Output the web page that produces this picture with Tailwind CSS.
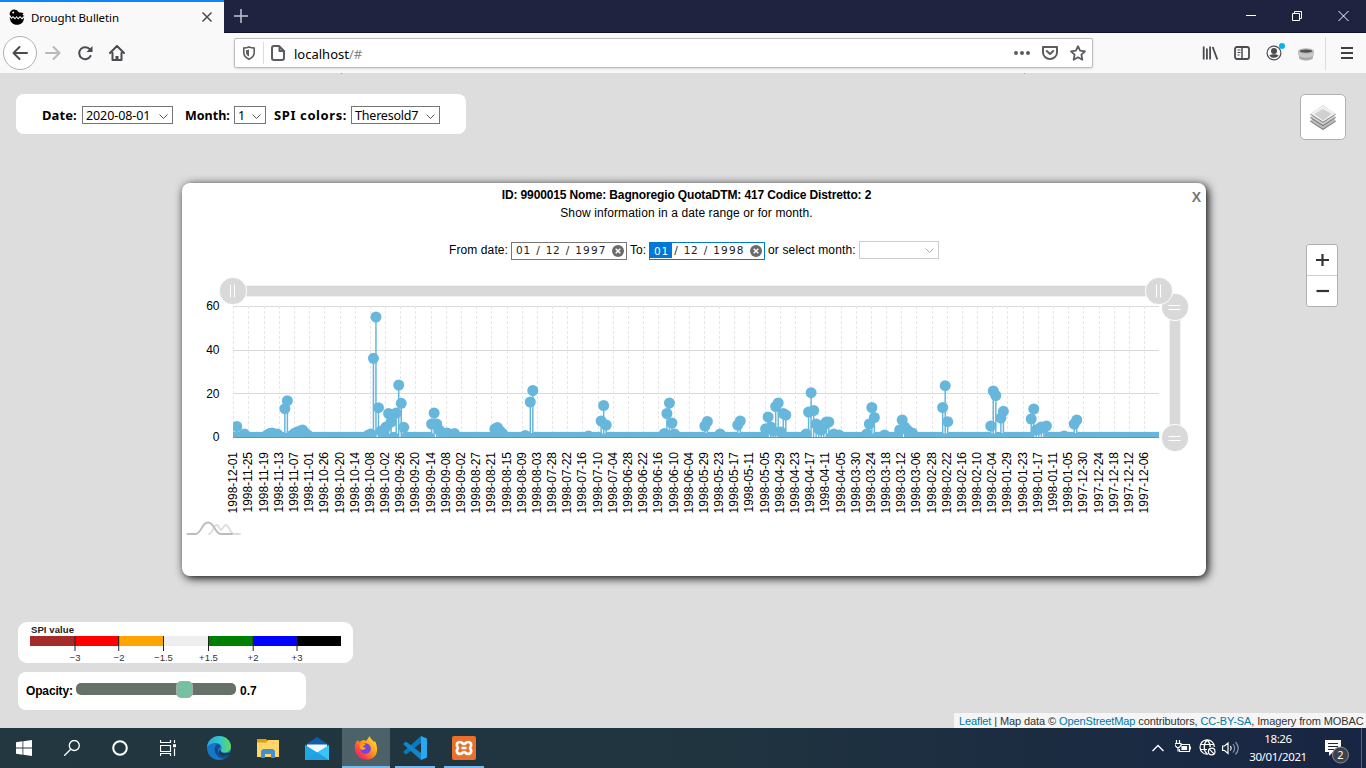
<!DOCTYPE html>
<html lang="en">
<head>
<meta charset="utf-8">
<title>Drought Bulletin</title>
<script src="https://cdn.jsdelivr.net/npm/@tailwindcss/browser@4"></script>
</head>
<body class="w-[1366px] h-[768px] overflow-hidden flex flex-col bg-[#ddd] font-['Liberation_Sans',Arial,sans-serif] text-[12px] text-black">

<!-- Tab strip -->
<header class="h-[33px] flex bg-[#20233f] border-b border-[#10122b] shrink-0">
  <div class="w-[224px] h-[33px] bg-[#f9f9fa] border-t-2 border-[#0a84ff] flex items-center pl-[9px] pr-[11px] pb-px">
    <svg class="w-4 h-4 shrink-0" viewBox="0 0 16 16"><path d="M.5 5C1 2 3 .5 5 .5c2 0 3 .7 4.500 2.500 1 .9 2.500.2 5 1L13.500 6l2 1-1.500.5L13 9l-2-2-1.800 2L7.500 7 6 9 4 7 2.500 8.500Z"/><path d="M.7 8l1.800 2L4 8.500 6 10.500l1.500-2 1.700 2L11 8.500l2 2 2-1.800C15 13 12 15.800 8 15.800S.9 13 .7 8Z"/><circle cx="4.200" cy="3.600" r="1" fill="#fff"/></svg>
    <span class="ml-[6px] mt-px grow whitespace-nowrap font-['Noto_Sans',sans-serif] text-[11.5px] tracking-[-0.1px]">Drought Bulletin</span>
    <svg class="w-3 h-3" viewBox="0 0 12 12" stroke="#4a4a4f" stroke-width="1.500"><path d="M1.500 1.500l9 9M10.500 1.500l-9 9"/></svg>
  </div>
  <svg class="w-[14px] h-[14px] ml-[10px] mt-[9px]" viewBox="0 0 14 14" stroke="#c4c5d0" stroke-width="1.500"><path d="M7 0v14M0 7h14"/></svg>
  <div class="grow"></div>
  <svg class="w-[104px] h-[12px] mt-[10px] mr-[16px]" viewBox="0 0 104 12" fill="none" stroke="#fff"><path d="M0 5.500h10M46.500 3.500h7v7h-7zM48.500 3.500v-2h7v7h-2M92.500 1l10 10M102.500 1l-10 10" /></svg>
</header>

<!-- Navigation bar -->
<nav class="h-[40px] bg-[#f9f9fa] flex items-center shrink-0 pl-[3px] pr-[13px]">
  <div class="w-[34px] h-[34px] rounded-full border border-[#b1b1b3] bg-white flex items-center justify-center"><svg class="w-4 h-4" viewBox="0 0 16 16" fill="none" stroke="#4a4a4f" stroke-width="2" stroke-linecap="round" stroke-linejoin="round"><path d="M15 8H1.500M7.500 2l-6 6 6 6"/></svg></div>
  <svg class="w-4 h-4 ml-[8px]" viewBox="0 0 16 16" fill="none" stroke="#b9b9bb" stroke-width="2" stroke-linecap="round" stroke-linejoin="round"><path d="M1 8h13.500M8.500 2l6 6-6 6"/></svg>
  <svg class="w-4 h-4 ml-[16px]" viewBox="0 0 16 16"><path d="M13 4.500A6 6 0 1 0 13.500 11" fill="none" stroke="#4a4a4f" stroke-width="2" stroke-linecap="round"/><path d="M15.500 1v6H9.500Z" fill="#4a4a4f"/></svg>
  <svg class="w-4 h-4 ml-[16px]" viewBox="0 0 16 16" fill="none" stroke="#4a4a4f" stroke-width="2" stroke-linecap="round" stroke-linejoin="round"><path d="M1 8l7-7 7 7M3.500 8v7h9V8"/><path d="M8 15v-4" stroke-width="3" stroke-linecap="butt"/></svg>
  <div class="ml-[109px] w-[859px] h-[30px] bg-white border border-[#bdbdbf] rounded-[2px] shadow-sm flex items-center pl-[7px] pr-[6px]">
    <svg class="w-[14px] h-[14px]" viewBox="0 0 14 14"><path d="M7 1c2 .8 3.500 1 5.200 1v4.500c0 3.300-2 5.300-5.200 6.700C3.800 11.800 1.800 9.800 1.800 6.500V2C3.500 2 5 1.800 7 1Z" fill="none" stroke="#5c5c60" stroke-width="1.600"/><path d="M7 3.500v7c-2-1-3-2.300-3-4.500V4.200C5 4.200 6 4 7 3.500Z" fill="#5c5c60"/></svg>
    <div class="w-px h-[22px] bg-[#ddd] ml-[7px]"></div>
    <svg class="w-[14px] h-4 ml-[7px]" viewBox="0 0 14 16" fill="none" stroke="#5c5c60" stroke-width="2" stroke-linejoin="round"><path d="M1 3a2 2 0 0 1 2-2h5l5 5v7a2 2 0 0 1-2 2H3a2 2 0 0 1-2-2ZM8.500 1v5H13"/></svg>
    <span class="ml-[9px] grow font-['Noto_Sans',sans-serif] text-[13px] pt-[3px]">localhost<span class="text-[#85858a]">/#</span></span>
    <svg class="w-4 h-4" viewBox="0 0 16 16" fill="#5c5c60"><circle cx="2" cy="8" r="2"/><circle cx="8" cy="8" r="2"/><circle cx="14" cy="8" r="2"/></svg>
    <svg class="w-4 h-4 ml-[12px]" viewBox="0 0 16 16" fill="none" stroke="#5c5c60" stroke-width="2" stroke-linecap="round" stroke-linejoin="round"><path d="M1 2h14v5.500a7 6.500 0 0 1-14 0ZM4.800 6L8 9l3.200-3"/></svg>
    <svg class="w-4 h-4 ml-[12px]" viewBox="0 0 16 16" fill="none" stroke="#5c5c60" stroke-width="1.800" stroke-linejoin="round"><path d="M8 1.200l2.100 4.500 4.900.6-3.600 3.400.9 5L8 12.300l-4.300 2.400.9-5L1 6.300l4.900-.6Z"/></svg>
  </div>
  <div class="grow"></div>
  <svg class="w-4 h-4" viewBox="0 0 16 16" stroke="#4a4a4f" stroke-width="1.800"><path d="M1.700 1.500v13M4.900 3.500v11M8.100 1.500v13M10.700 2l4.600 12.500"/></svg>
  <svg class="w-4 h-4 ml-[16px]" viewBox="0 0 16 16" fill="none" stroke="#4a4a4f" stroke-width="1.800"><rect x="1" y="2" width="14" height="12" rx="2"/><path d="M8 2v12" stroke-width="1.500"/><path d="M3.500 5h3M3.500 7.500h3M3.500 10h2" stroke-width="1"/></svg>
  <svg class="w-[19px] h-5 ml-[16px]" viewBox="0 0 19 20"><circle cx="8" cy="10" r="6.900" fill="none" stroke="#4a4a4f" stroke-width="1.200"/><circle cx="8" cy="8" r="3" fill="#4a4a4f"/><path d="M3.500 12.500c2-1.800 7-1.800 9 0-2 3-7 3-9 0Z" fill="#4a4a4f"/><circle cx="16" cy="3" r="3" fill="#00b3f4"/></svg>
  <svg class="w-4 h-4 ml-[13px]" viewBox="0 0 16 16"><path d="M1 8v4.500c0 4 14 4 14 0V8Z" fill="#aaa"/><path d="M0 6v3.500c0 4 16 4 16 0V6Z" fill="#c8c8c8"/><ellipse cx="8" cy="6.200" rx="8" ry="3" fill="#bbb"/><ellipse cx="8" cy="6.200" rx="6.200" ry="1.600" fill="#515151"/></svg>
  <div class="w-px h-[33px] bg-[#dcdcdc] ml-[11px] mr-[14px]"></div>
  <svg class="w-[13px] h-4" viewBox="0 0 13 16" stroke="#3e3e43" stroke-width="2"><path d="M1 3h12M1 8h12M1 13h12"/></svg>
</nav>

<!-- Map -->
<main class="relative grow bg-[#ddd]">
  <div class="absolute left-[341px] top-0 w-px h-px bg-[#999]"></div>
  <div class="absolute left-[1024px] top-0 w-px h-px bg-[#999]"></div>
  <section class="absolute left-[16px] top-[21px] w-[450px] h-[40px] bg-white rounded-[8px] flex items-center pl-[26px] pt-[2px] font-['Noto_Sans',sans-serif] text-[12.500px] whitespace-nowrap">
    <b class="w-[40px] pt-[2px] text-[13px] tracking-[0.1px]">Date:</b>
    <div class="w-[91px] h-[18px] border border-[#767676] flex items-center pl-[3px] pr-[4px] justify-between"><span class="pt-[2px] tracking-[-0.1px]">2020-08-01</span><svg class="w-[9px] h-[6px] mt-[3px]" viewBox="0 0 9 6" fill="none" stroke="#555"><path d="M.5.5l4 4 4-4"/></svg></div>
    <b class="ml-[12px] w-[49px] pt-[2px] text-[12.500px]">Month:</b>
    <div class="w-[32px] h-[18px] border border-[#767676] flex items-center pl-[3px] pr-[4px] justify-between"><span class="pt-[2px]">1</span><svg class="w-[9px] h-[6px] mt-[3px]" viewBox="0 0 9 6" fill="none" stroke="#555"><path d="M.5.5l4 4 4-4"/></svg></div>
    <b class="ml-[8px] w-[77px] pt-[2px] text-[13px] tracking-[0.6px]">SPI colors:</b>
    <div class="w-[89px] h-[18px] border border-[#767676] flex items-center pl-[3px] pr-[4px] justify-between"><span class="pt-[2px] tracking-[-0.2px]">Theresold7</span><svg class="w-[9px] h-[6px] mt-[3px]" viewBox="0 0 9 6" fill="none" stroke="#555"><path d="M.5.5l4 4 4-4"/></svg></div>
  </section>

  <div class="absolute left-[1300px] top-[21px] w-[46px] h-[46px] bg-white border border-[#b0b0b0] rounded-[5px] flex items-center justify-center">
    <svg class="w-[26px] h-[26px]" viewBox="0 0 26 26"><path d="M0 17.500l13-8 13 8L13 26Z" fill="#777"/><path d="M0 16.500l13-8 13 8-13 8.300Z" fill="#bdbdbd"/><path d="M0 13.800l13-8 13 8-13 8.500Z" fill="#777"/><path d="M0 12.800l13-8 13 8-13 8.300Z" fill="#cfcfcf"/><path d="M0 10.200l13-8.700 13 8.700L13 18.700Z" fill="#777"/><path d="M0 9.500l13-8 13 8-13 8.300Z" fill="#efefef"/><path d="M4.500 10L13 5l8.500 5L13 16.500Z" fill="#d0d0d0"/></svg>
  </div>

  <div class="absolute left-[1306px] top-[171px] w-[32px] h-[63px] bg-white border border-[#b0b0b0] rounded-[3px] flex flex-col">
    <div class="h-[31px] border-b border-[#ccc] flex items-center justify-center"><svg class="w-[13px] h-[13px]" viewBox="0 0 13 13" stroke="#333" stroke-width="2.200"><path d="M6.500 0v12M0 6h13"/></svg></div>
    <div class="h-[30px] flex items-center justify-center"><svg class="w-[13px] h-[13px]" viewBox="0 0 13 13" stroke="#333" stroke-width="2.200"><path d="M.5 6h13"/></svg></div>
  </div>

  <!-- Station popup -->
  <section class="absolute left-[182px] top-[110px] w-[1024px] h-[393px] bg-white rounded-[8px] shadow-[2px_2px_10px_#000] flex flex-col whitespace-nowrap">
    <b class="absolute right-[5px] top-[6px] text-[14px] leading-[16px] text-[#777]">X</b>
    <div class="h-[87px] w-[1009px] flex flex-col items-center pt-[3px]">
      <b class="leading-[18px] tracking-[-0.14px]">ID: 9900015 Nome: Bagnoregio QuotaDTM: 417 Codice Distretto: 2</b>
      <span class="leading-[18px] tracking-[0.11px]">Show information in a date range or for month.</span>
      <div class="flex items-center self-start ml-[267px] mt-[18px] h-[19px]">
        <span class="w-[62px] tracking-[0.1px]">From date:</span>
        <div class="w-[116px] h-[18px] mt-[2px] border border-[#767676] flex items-center justify-between pl-[4px] pr-[2px] font-['DejaVu_Sans',sans-serif] text-[10.500px] text-[#222] tracking-[0.7px]"><span class="w-[15px]">01</span><span>/</span><span>12</span><span>/</span><span class="tracking-[1.200px]">1997</span><svg class="w-3 h-3" viewBox="0 0 12 12"><circle cx="6" cy="6" r="6" fill="#6b6b6b"/><path d="M3.700 3.700l4.600 4.600M8.300 3.700L3.700 8.300" stroke="#fff" stroke-width="1.500"/></svg></div>
        <span class="w-[16px] ml-[3px] mr-[3px]">To:</span>
        <div class="w-[116px] h-[18px] mt-[2px] border border-[#0078d7] flex items-center justify-between pr-[2px] font-['DejaVu_Sans',sans-serif] text-[10.500px] text-[#222] tracking-[0.7px]"><span class="w-[22px] h-[15px] leading-[16px] pl-[4px] mr-[-3px] bg-[#0078d7] text-white">01</span><span>/</span><span>12</span><span>/</span><span class="tracking-[1.200px]">1998</span><svg class="w-3 h-3" viewBox="0 0 12 12"><circle cx="6" cy="6" r="6" fill="#6b6b6b"/><path d="M3.700 3.700l4.600 4.600M8.300 3.700L3.700 8.300" stroke="#fff" stroke-width="1.500"/></svg></div>
        <span class="ml-[3px] w-[91px] tracking-[0.15px]">or select month:</span>
        <div class="w-[80px] h-[18px] border border-[#ccc] flex items-center justify-end pr-[4px]"><svg class="w-[9px] h-[6px] mt-[2px]" viewBox="0 0 9 6" fill="none" stroke="#aaa"><path d="M.5.5l4 4 4-4"/></svg></div>
      </div>
    </div>
    <svg class="w-[1024px] h-[306px] block text-[12px]" viewBox="182 270 1024 306">
      <defs><clipPath id="plot"><rect x="233" y="300" width="926" height="137.600"/></clipPath></defs>
      <g id="grid"></g>
      <g id="series" clip-path="url(#plot)" fill="#67b7dc"></g>
      <path d="M233 437.500h926" stroke="#4f9cc2"/>
      <g text-anchor="end"><text x="219.500" y="310">60</text><text x="219.500" y="354">40</text><text x="219.500" y="398">20</text><text x="219.500" y="441">0</text></g>
      <g id="labels" text-anchor="end"></g>
      <g fill="#d9d9d9" stroke="#f2f2f2">
        <rect x="233" y="285.500" width="926" height="11"/>
        <rect x="1169.500" y="307" width="11" height="131"/>
        <g stroke="#fff"><circle cx="1175" cy="307" r="13.700"/><circle cx="1175" cy="438" r="13.700"/><circle cx="233" cy="291" r="13.700"/><circle cx="1159" cy="291" r="13.700"/></g>
        <path stroke="#fff" d="M230.500 284.500v13M234.500 284.500v13M1156.500 284.500v13M1160.500 284.500v13M1168.500 305.500h12M1168.500 309.500h12M1168.500 436.500h12M1168.500 440.500h12"/>
      </g>
      <g fill="none" stroke-width="1.800" stroke-linecap="round"><path stroke="#ddd" d="M209 534c4 0 4-9 7.500-9s2.500 5 4.500 5 2-5 5-5 4 9 8 9h6"/><path stroke="#bbb" d="M187.500 534h8c6 0 6-11.500 12.500-11.500S215 534 221 534h11"/></g>
    </svg>
  </section>

  <!-- Legend -->
  <section class="absolute left-[18px] top-[549px] w-[335px] h-[41px] bg-white rounded-[9px]">
    <svg class="w-[335px] h-[41px] text-[9.500px]" viewBox="0 0 335 41" fill="#333">
      <text x="13" y="11" font-weight="bold" fill="#222" textLength="43">SPI value</text>
      <rect x="12" y="14" width="45" height="10" fill="#a52a2a"/><rect x="57" y="14" width="44" height="10" fill="red"/><rect x="101" y="14" width="45" height="10" fill="orange"/><rect x="146" y="14" width="45" height="10" fill="#eee"/><rect x="191" y="14" width="44" height="10" fill="green"/><rect x="235" y="14" width="44" height="10" fill="blue"/><rect x="279" y="14" width="44" height="10" fill="#000"/>
      <path stroke="#222" d="M57 14v15M100.700 14v15M145.500 14v15M190.500 14v15M235.200 14v15M279 14v15"/>
      <g text-anchor="middle"><text x="57" y="39">−3</text><text x="101" y="39">−2</text><text x="145.500" y="39">−1.5</text><text x="190.500" y="39">+1.5</text><text x="235" y="39">+2</text><text x="279" y="39">+3</text></g>
    </svg>
  </section>
  <section class="absolute left-[18px] top-[599px] w-[288px] h-[38px] bg-white rounded-[8px] flex items-center pl-[8px] font-bold">
    <span class="w-[50px] tracking-[-0.15px]">Opacity:</span>
    <div class="w-[160px] h-[12px] mb-[4px] bg-[#667268] rounded-[5px] flex items-center pl-[100px]"><div class="w-[17px] h-[17px] shrink-0 rounded-[5px] bg-[#74c0a1] border border-[#a9adaa]"></div></div>
    <span class="ml-[4px]">0.7</span>
  </section>

  <div class="absolute right-0 bottom-0 w-[412px] h-[15px] bg-[#f5f5f5] text-[11px] leading-[16px] tracking-[-0.1px] pl-[5px] text-[#333] whitespace-nowrap"><span class="text-[#0078a8]">Leaflet</span> | Map data © <span class="text-[#0078a8]">OpenStreetMap</span> contributors, <span class="text-[#0078a8]">CC-BY-SA</span>, Imagery from MOBAC</div>
</main>

<!-- Taskbar -->
<footer class="h-[40px] shrink-0 flex bg-linear-to-r from-[#22373f] via-[#20343f] to-[#182543] text-white">
  <div class="w-12 flex items-center justify-center"><svg class="w-4 h-4" viewBox="0 0 16 16" fill="#fff"><path d="M0 2.200l6.500-.9v6.300H0ZM7.300 1.200L16 0v7.600H7.300ZM0 8.400h6.500v6.300L0 13.800ZM7.300 8.400H16V16l-8.700-1.200Z"/></svg></div>
  <div class="w-12 flex items-center justify-center"><svg class="w-4 h-4" viewBox="0 0 16 16" fill="none" stroke="#fff" stroke-width="1.300"><circle cx="10.300" cy="5.500" r="5"/><path d="M6.700 9.200L0 16"/></svg></div>
  <div class="w-12 flex items-center justify-center"><svg class="w-4 h-4" viewBox="0 0 16 16"><circle cx="8" cy="8" r="6.800" fill="none" stroke="#fff" stroke-width="2"/></svg></div>
  <div class="w-12 flex items-center justify-center"><svg class="w-4 h-4" viewBox="0 0 16 16" fill="none" stroke="#fff" stroke-width="1.200"><path d="M.5 0v2.500h10V0M.5 5.500h10v6H.5zM.5 16v-2.500h10V16M14.500 0v3M14.500 8.500V16"/><path d="M13 5.700h3" stroke-width="3"/></svg></div>
  <div class="w-[54px] flex items-center justify-center"><svg class="w-6 h-6" viewBox="0 0 24 24"><defs><linearGradient id="e1" x1="0" x2="1"><stop stop-color="#2aa9e0"/><stop offset=".6" stop-color="#36c9c0"/><stop offset="1" stop-color="#65d951"/></linearGradient></defs><circle cx="12" cy="12" r="12" fill="#1478c9"/><path d="M0 11C1 4 6 0 12 0c7 0 12 5 12 10.500 0 4-3 6-6.500 6-3 0-4-1.500-3.500-2.500 2-4-1-7-5-7-5 0-8 2.500-9 4Z" fill="url(#e1)"/><path d="M10 8c-5 5-2 13 6 14.500 2.500 0 5-2.500 6-4-5 3-11 0-11-4 0-2 1-3 2-3.500C13 9 12 8 10 8Z" fill="#104a91"/><path d="M14 14c-1 2 1 3.500 5 3.200l5-.9v2l-2 .2c-5 3-11 0-10-3 0-1 1-1.500 2-1.500Z" fill="#22373f"/></svg></div>
  <div class="w-[44px] flex items-center justify-center"><svg class="w-[22px] h-[19px]" viewBox="0 0 22 19"><path d="M0 0h9l2 2h11v16H0Z" fill="#e0a100"/><path d="M0 3.500h9L11 1h11v17H0Z" fill="#ffd667"/><path d="M4 19v-7l2-2h10l2 2v7h-4v-4H8v4Z" fill="#3f91d2"/></svg></div>
  <div class="w-[54px] flex items-center justify-center"><svg class="w-6 h-[23px]" viewBox="0 0 24 23"><path d="M0 8L12 0l12 8v6H0Z" fill="#0f5dab"/><path d="M2 7.500h20v7L12 17 2 14Z" fill="#f3f8fb"/><path d="M0 8l12 7.500L24 8v15H0Z" fill="#36c5f4"/><path d="M0 8l12 7.500L0 23Z" fill="#1fa6e5"/><path d="M0 23l12-8 12 8Z" fill="#239fdf"/></svg></div>
  <div class="w-[48px] -ml-[2px] bg-[#4d6169] border-b-2 border-[#76b9ed] flex items-center justify-center pt-[2px]"><svg class="w-6 h-6" viewBox="0 0 24 24"><defs><linearGradient id="f1" x1="1" y1="0" x2="0" y2="1"><stop stop-color="#fff04a"/><stop offset=".45" stop-color="#ff980e"/><stop offset=".75" stop-color="#ff3750"/><stop offset="1" stop-color="#e31587"/></linearGradient></defs><path d="M2 6l2-2 1 2c2-1 3-2 5-2l2 1c1-1 2-3 4-5 0 3 2 3 4 6l1-1c3 6 3 12-1 16-5 4-12 3-16-1-4-5-4-10-2-14Z" fill="url(#f1)"/><circle cx="11.500" cy="12.500" r="5.300" fill="#7542e5"/><path d="M5 8c3-2 6 0 7 1-2 0-3 1-3 2l3 1c-2 3-6 2-6 0Z" fill="#ff9f1c"/></svg></div>
  <div class="w-[40px] ml-[5px] border-b-2 border-[#76b9ed] flex items-center justify-center pt-[2px]"><svg class="w-6 h-6" viewBox="0 0 24 24"><path d="M18 0v7L3 18.500 0 16Z" fill="#0879bf"/><path d="M18 24v-7L3 5.500 0 8Z" fill="#1185cd"/><path d="M18 0l6 2.500v19L18 24Z" fill="#2aa8ef"/></svg></div>
  <div class="w-[40px] ml-[9px] border-b-2 border-[#76b9ed] flex items-center justify-center pt-[2px]"><svg class="w-6 h-6" viewBox="0 0 24 24"><rect width="24" height="24" rx="2" fill="#e8702a"/><path d="M8 6c-3.500 0-4 3.500-2 6-2 2.500-1.500 6 2 6 2.500 0 2.500-2 4-2s1.500 2 4 2c3.500 0 4-3.500 2-6 2-2.500 1.500-6-2-6-2.500 0-2.500 2-4 2s-1.500-2-4-2ZM9.500 12h5" fill="none" stroke="#fff" stroke-width="2.700" stroke-linejoin="round"/></svg></div>
  <div class="grow"></div>
  <svg class="w-[12px] h-[8px] mt-[16px]" viewBox="0 0 12 8" fill="none" stroke="#fff" stroke-width="1.400"><path d="M.5 7L6 1.500 11.500 7"/></svg>
  <svg class="w-4 h-4 ml-[11px] mt-[12px]" viewBox="0 0 16 16" fill="none" stroke="#fff" stroke-width="1.200"><path d="M6 4.500h8.500v7h-10V9M15.500 6.500v3M1.500 0v3M4.500 0v3M0 3.500h6v2L4 7.500H2L0 5.500ZM3 7.500V11.500"/><path d="M7 6.500h4.500v3H7z" fill="#fff"/></svg>
  <svg class="w-[17px] h-[17px] ml-[8px] mt-[11px]" viewBox="0 0 17 17" fill="none" stroke="#fff" stroke-width="1.200"><path d="M9 15.200A7.200 7.200 0 1 1 15.400 8M1.500 5.500h13M1.500 10.500H8M8.200 1c-4 3.500-4 10.500 0 14M8.200 1c2.300 2 3 4.500 3 7"/><circle cx="12.700" cy="12.500" r="3.300"/><path d="M10.500 10.300l4.500 4.500"/></svg>
  <svg class="w-[17px] h-[15px] ml-[6px] mt-[13px]" viewBox="0 0 17 15" fill="none" stroke="#fff" stroke-width="1.200"><path d="M.6 5v4.500h2L6 12.500V2L2.600 5ZM8.500 5c1 1.500 1 3 0 4.500"/><path d="M11 3c2.300 3 2.300 5.500 0 8.500M13.500 1c3.500 4 3.500 8.500 0 12.500" stroke="#8992a5"/></svg>
  <div class="w-[60px] ml-[9px] flex flex-col items-center pt-[2px] font-['Noto_Sans',sans-serif] text-[11.500px] leading-[18px] tracking-[-0.35px] whitespace-nowrap"><span>18:26</span><span>30/01/2021</span></div>
  <svg class="w-6 h-6 ml-[17px] mt-[12px]" viewBox="0 0 24 24"><path d="M0 0h16v12H8l-4 4v-4H0Z" fill="#fff"/><path d="M3 3.500h10M3 6.500h10M3 9.500h6" stroke="#1a2944"/><circle cx="15.500" cy="15" r="8" fill="#3d424c" stroke="#8a8f99"/><text x="15.500" y="19" fill="#fff" text-anchor="middle" class="text-[11px] font-['Noto_Sans',sans-serif]">2</text></svg>
  <div class="w-px bg-[#56617a] ml-[12px] mr-[4px]"></div>
</footer>

<script>
const NS = 'http://www.w3.org/2000/svg', step = 926 / 366, days = 366, zero = 437.2;
const add = (id, tag, attrs, text) => {
  const n = document.createElementNS(NS, tag);
  for (const k in attrs) n.setAttribute(k, attrs[k]);
  if (text) n.textContent = text;
  document.getElementById(id).appendChild(n);
};
for (const y of [306.5, 350.5, 393.5]) add('grid', 'path', {d: `M233 ${y}h926`, stroke: '#d9d9d9'});
for (let i = 0; i < days; i += 6) {
  const x = Math.round(233.3 + i * step);
  add('grid', 'path', {d: `M${x + .5} 306v131`, stroke: '#e6e6e6', 'stroke-dasharray': '3 2'});
  const date = new Date(Date.UTC(1998, 11, 1) - i * 864e5).toISOString().slice(0, 10);
  add('labels', 'text', {transform: `translate(${x + 4} 452) rotate(-90)`}, date);
}
const points = [[236.5,426.5],[244,434],[267,435],[270,433.5],[273,433],[277,434],[284.7,408.7],[287.3,400.7],[292,435],[295,433],[297,432],[300,431],[302.500,430],[305,433],[308,435],[368,435],[371,434],[373.3,358.3],[376,317],[378.3,407.7],[381,431],[383.5,435],[386,427],[388.5,413.5],[391,422],[396.5,413],[398.7,385],[401.3,403.3],[404,427.3],[431.5,424],[434,413],[436.5,424],[439,430],[442,433],[446,433],[449,434],[454,433.5],[494.5,429],[497,427.5],[500,431],[503,433.5],[525,435.5],[530,402],[532.7,390.5],[589,436],[601,421],[603.5,405.5],[606,425],[664,433.5],[667,413.5],[669.3,403],[672,423],[675,434],[704.5,426],[707.3,421.5],[719,434],[737.5,425],[740.3,421],[765.5,429],[768,417],[771,427],[773,431],[775.5,406.5],[778.3,403],[780.5,432],[783.5,413.5],[786,415],[806,434],[808.5,412],[811,392.7],[813.5,410.5],[816,424],[818.7,429],[821.2,430],[824,425],[826.3,422],[829,422],[834,434],[840,435],[867,434],[869,424],[871.7,407.5],[874.3,417.5],[884,435],[899.7,430],[902.3,420],[905,427],[907.5,430],[912,433],[942.5,407.5],[945,385.7],[947.5,421.7],[991,426],[993.2,391],[995.7,395.5],[1001,418],[1003.3,411.3],[1031,419],[1033.7,409],[1036.2,430],[1039,429],[1041.5,427],[1044,428],[1046.5,426],[1063,436],[1074,424],[1076.7,420]];
const level = {};
for (const [x, y] of points) level[Math.round((x - 233) / step - .5)] = y;
for (let i = 0; i < days; i++) {
  const x = 233 + (i + .5) * step, y = level[i] ?? zero;
  if (y < zero) add('series', 'path', {d: `M${x} ${y}V438`, stroke: '#67b7dc', 'stroke-width': 1.5});
  add('series', 'circle', {cx: x, cy: y, r: 5.5});
}
</script>
</body>
</html>
